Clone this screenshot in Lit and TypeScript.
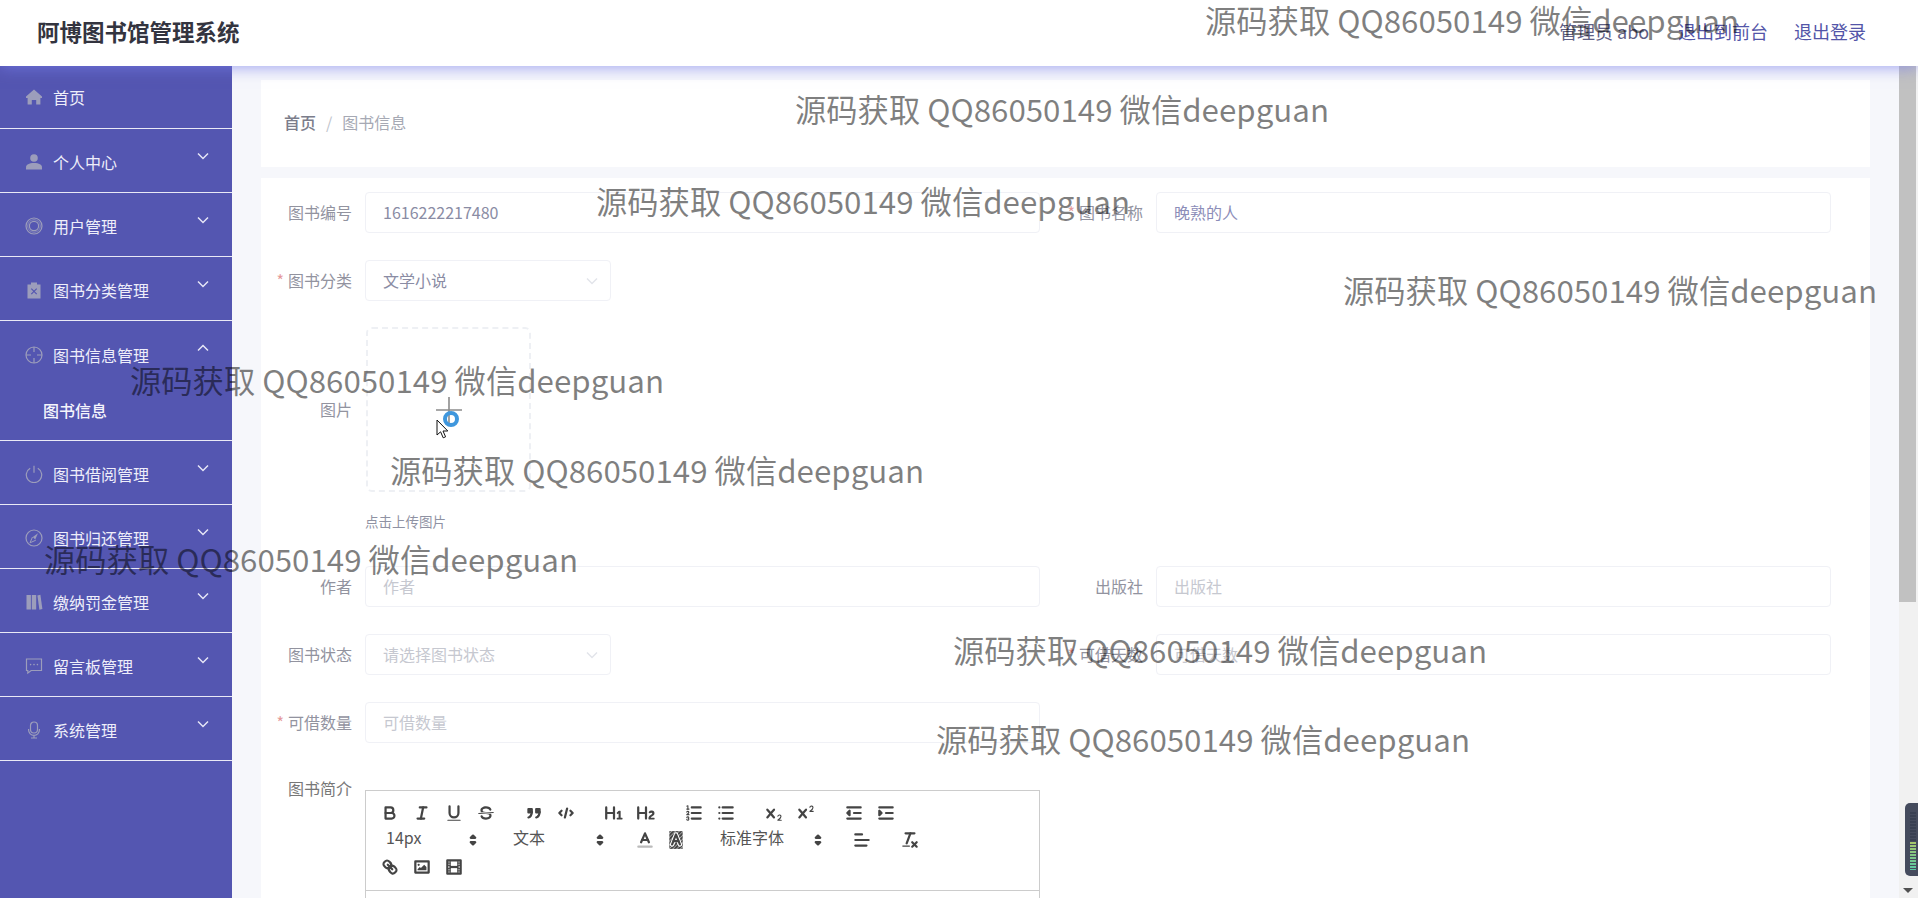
import { LitElement, html, css, svg } from "lit";
import { customElement } from "lit/decorators.js";

const S = (inner: unknown) => html`<svg class="ql" viewBox="0 0 18 18">${inner}</svg>`;

const QL = {
  bold: S(svg`<path d="M5,4H9.5A2.5,2.5,0,0,1,12,6.5v0A2.5,2.5,0,0,1,9.5,9H5A0,0,0,0,1,5,9V4A0,0,0,0,1,5,4Z"/><path d="M5,9h5.5A2.5,2.5,0,0,1,13,11.5v0A2.5,2.5,0,0,1,10.5,14H5a0,0,0,0,1,0,0V9A0,0,0,0,1,5,9Z"/>`),
  italic: S(svg`<line x1="7" x2="13" y1="4" y2="4"/><line x1="5" x2="11" y1="14" y2="14"/><line x1="8" x2="10" y1="14" y2="4"/>`),
  underline: S(svg`<path d="M5,3V9a4.012,4.012,0,0,0,4,4H9a4.012,4.012,0,0,0,4-4V3"/><rect class="f" height="1" rx=".5" ry=".5" width="12" x="3" y="15"/>`),
  strike: S(svg`<line class="t" x1="15.5" x2="2.5" y1="8.5" y2="9.5"/><path class="f" d="M9.007,8C6.542,7.791,6,7.519,6,6.5,6,5.792,7.283,5,9,5c1.571,0,2.765.679,2.969,1.309a1,1,0,0,0,1.9-.617C13.356,4.106,11.354,3,9,3,6.2,3,4,4.538,4,6.5a3.2,3.2,0,0,0,.5,1.843Z"/><path class="f" d="M8.984,10C11.457,10.208,12,10.479,12,11.5c0,.708-1.283,1.5-3,1.5-1.571,0-2.765-.679-2.969-1.309a1,1,0,1,0-1.9.617C4.644,13.894,6.646,15,9,15c2.8,0,5-1.538,5-3.5a3.2,3.2,0,0,0-.5-1.843Z"/>`),
  quote: S(svg`<rect class="fs" height="3" width="3" x="4" y="5.5"/><rect class="fs" height="3" width="3" x="11" y="5.5"/><path class="fs" d="M7,8c0,4.031-3,5-3,5"/><path class="fs" d="M14,8c0,4.031-3,5-3,5"/>`),
  code: S(svg`<polyline points="5 7 3 9 5 11"/><polyline points="13 7 15 9 13 11"/><line x1="10" x2="8" y1="5" y2="13"/>`),
  h1: S(svg`<path class="f" d="M10,4V14a1,1,0,0,1-2,0V10H3v4a1,1,0,0,1-2,0V4A1,1,0,0,1,3,4V8H8V4a1,1,0,0,1,2,0Zm6.06787,9.209H14.98975V7.59863a.54085.54085,0,0,0-.605-.60547h-.62744a1.01119,1.01119,0,0,0-.748.29688L11.645,8.56641a.5435.5435,0,0,0-.022.8584l.28613.30762a.53861.53861,0,0,0,.84717.0332l.09912-.08789a1.2137,1.2137,0,0,0,.2417-.35254h.02246s-.01123.30859-.01123.60547V13.209H12.041a.54085.54085,0,0,0-.605.60547v.43945a.54085.54085,0,0,0,.605.60547h4.02686a.54085.54085,0,0,0,.605-.60547v-.43945A.54085.54085,0,0,0,16.06787,13.209Z"/>`),
  h2: S(svg`<path class="f" d="M16.73975,13.81445v.43945a.54085.54085,0,0,1-.605.60547H11.855a.58392.58392,0,0,1-.64893-.60547V14.0127c0-2.90527,3.39941-3.42187,3.39941-4.55469a.77675.77675,0,0,0-.84717-.78125,1.17684,1.17684,0,0,0-.83594.38477c-.2749.26367-.561.374-.85791.13184l-.4292-.34082c-.30811-.24219-.38525-.51758-.1543-.81445a2.97155,2.97155,0,0,1,2.45361-1.17676,2.45393,2.45393,0,0,1,2.68408,2.40918c0,2.45312-3.1792,2.92676-3.27832,3.93848h2.79443A.54085.54085,0,0,1,16.73975,13.81445ZM9,3A.99974.99974,0,0,0,8,4V8H3V4A1,1,0,0,0,1,4V14a1,1,0,0,0,2,0V10H8v4a1,1,0,0,0,2,0V4A.99974.99974,0,0,0,9,3Z"/>`),
  ol: S(svg`<line x1="7" x2="15" y1="4" y2="4"/><line x1="7" x2="15" y1="9" y2="9"/><line x1="7" x2="15" y1="14" y2="14"/><line class="t" x1="2.5" x2="4.5" y1="5.5" y2="5.5"/><path class="f" d="M3.5,6A0.5,0.5,0,0,1,3,5.5V3.085l-0.276.138A0.5,0.5,0,0,1,2.053,3c-0.124-.247-0.023-0.324.224-0.447l1-.5A0.5,0.5,0,0,1,4,2.5v3A0.5,0.5,0,0,1,3.5,6Z"/><path class="t" d="M4.5,10.5h-2c0-.234,1.85-1.076,1.85-2.234A0.959,0.959,0,0,0,2.5,8.156"/><path class="t" d="M2.5,14.846a0.959,0.959,0,0,0,1.85-.109A0.7,0.7,0,0,0,3.75,14a0.688,0.688,0,0,0,.6-0.736,0.959,0.959,0,0,0-1.85-.109"/>`),
  ul: S(svg`<line x1="6" x2="15" y1="4" y2="4"/><line x1="6" x2="15" y1="9" y2="9"/><line x1="6" x2="15" y1="14" y2="14"/><line x1="3" x2="3" y1="4" y2="4"/><line x1="3" x2="3" y1="9" y2="9"/><line x1="3" x2="3" y1="14" y2="14"/>`),
  sub: S(svg`<path class="f" d="M15.5,15H13.861a3.858,3.858,0,0,0,1.914-2.975,1.8,1.8,0,0,0-1.6-1.751A1.921,1.921,0,0,0,12.021,11.7a0.50013,0.50013,0,1,0,.957.291h0a0.914,0.914,0,0,1,1.053-.725,0.81,0.81,0,0,1,.744.762c0,1.076-1.16971,1.86982-1.93971,2.43082A1.45639,1.45639,0,0,0,12,15.5a0.5,0.5,0,0,0,.5.5h3A0.5,0.5,0,0,0,15.5,15Z"/><path class="f" d="M9.65,5.241a1,1,0,0,0-1.409.108L6,7.964,3.759,5.349A1,1,0,0,0,2.241,6.651L4.684,9.5,2.241,12.35A1,1,0,0,0,3.759,13.651L6,11.036l2.241,2.615a1,1,0,0,0,1.519-1.3L7.316,9.5,9.759,6.651A1,1,0,0,0,9.65,5.241Z"/>`),
  sup: S(svg`<path class="f" d="M15.5,7H13.861a4.015,4.015,0,0,0,1.914-2.975,1.8,1.8,0,0,0-1.6-1.751A1.922,1.922,0,0,0,12.021,3.7a0.5,0.5,0,1,0,.957.291,0.917,0.917,0,0,1,1.053-.725,0.81,0.81,0,0,1,.744.762c0,1.077-1.164,1.925-1.934,2.486A1.423,1.423,0,0,0,12,7.5a0.5,0.5,0,0,0,.5.5h3A0.5,0.5,0,0,0,15.5,7Z"/><path class="f" d="M9.65,5.241a1,1,0,0,0-1.409.108L6,7.964,3.759,5.349A1,1,0,0,0,2.241,6.651L4.684,9.5,2.241,12.35A1,1,0,0,0,3.759,13.651L6,11.036l2.241,2.615a1,1,0,0,0,1.519-1.3L7.316,9.5,9.759,6.651A1,1,0,0,0,9.65,5.241Z"/>`),
  outdent: S(svg`<line x1="3" x2="15" y1="14" y2="14"/><line x1="3" x2="15" y1="4" y2="4"/><line x1="9" x2="15" y1="9" y2="9"/><polygon class="fs" points="5 7 5 11 3 9 5 7"/>`),
  indent: S(svg`<line x1="3" x2="15" y1="14" y2="14"/><line x1="3" x2="15" y1="4" y2="4"/><line x1="9" x2="15" y1="9" y2="9"/><polygon class="fs" points="3 7 3 11 5 9 3 7"/>`),
  arrows: S(svg`<polygon class="fs" points="7 11 9 13 11 11 7 11"/><polygon class="fs" points="7 7 9 5 11 7 7 7"/>`),
  color: S(svg`<line class="lbl" x1="3" x2="15" y1="15" y2="15"/><polyline class="th" points="5.5 11 9 3 12.5 11"/><line class="th" x1="11.63" x2="6.38" y1="9" y2="9"/>`),
  bg: S(svg`<defs><pattern id="hatch" width="2.4" height="2.4" patternUnits="userSpaceOnUse" patternTransform="rotate(45)"><rect width="1" height="2.4" fill="#888"/></pattern></defs><rect x="3" y="1" width="12" height="16" fill="url(#hatch)" stroke="none"/><polyline class="th" points="5.5 13 9 4 12.5 13" style="stroke:#fff;stroke-width:4"/><polyline class="th" points="5.5 13 9 4 12.5 13"/><line class="th" x1="11.2" x2="6.8" y1="10" y2="10"/>`),
  align: S(svg`<line x1="3" x2="15" y1="9" y2="9"/><line x1="3" x2="13" y1="14" y2="14"/><line x1="3" x2="9" y1="4" y2="4"/>`),
  clean: S(svg`<line x1="5" x2="13" y1="3" y2="3"/><line x1="6" x2="9.35" y1="12" y2="3"/><line x1="11" x2="15" y1="11" y2="15"/><line x1="15" x2="11" y1="11" y2="15"/><rect class="f" height="1" rx=".5" ry=".5" width="7" x="2" y="14"/>`),
  link: S(svg`<line x1="7" x2="11" y1="7" y2="11"/><path d="M8.9,4.577a3.476,3.476,0,0,1,.36,4.679A3.476,3.476,0,0,1,4.577,8.9C3.185,7.5,2.035,6.4,4.217,4.217S7.5,3.185,8.9,4.577Z"/><path d="M13.423,9.1a3.476,3.476,0,0,0-4.679-.36,3.476,3.476,0,0,0,.36,4.679c1.392,1.392,2.5,2.542,4.679.36S14.815,10.5,13.423,9.1Z"/>`),
  image: S(svg`<rect height="10" width="12" x="3" y="4"/><circle class="f" cx="6" cy="7" r="1"/><polyline class="f" points="5 12 5 11 7 9 8 10 11 7 13 9 13 12 5 12"/>`),
  video: S(svg`<rect height="12" width="12" x="3" y="3"/><rect class="f" height="12" width="1" x="5" y="3"/><rect class="f" height="12" width="1" x="12" y="3"/><rect class="f" height="2" width="8" x="5" y="8"/><rect class="f" height="1" width="3" x="3" y="5"/><rect class="f" height="1" width="3" x="3" y="7"/><rect class="f" height="1" width="3" x="3" y="10"/><rect class="f" height="1" width="3" x="3" y="12"/><rect class="f" height="1" width="3" x="12" y="5"/><rect class="f" height="1" width="3" x="12" y="7"/><rect class="f" height="1" width="3" x="12" y="10"/><rect class="f" height="1" width="3" x="12" y="12"/>`),
};

const M = (inner: unknown) => html`<svg class="mi" viewBox="0 0 18 18">${inner}</svg>`;
const MENU_ICONS = {
  home: M(svg`<path class="mf" d="M9 1.5 1 8.5V10h1.6v6.5h4.2V12h4.4v4.5h4.2V10H17V8.5Z"/>`),
  user: M(svg`<circle class="mf" cx="9" cy="5" r="3.8"/><path class="mf" d="M1 16.5v-2.2C1 11.6 4 10 9 10s8 1.6 8 4.3v2.2Z"/>`),
  ring: M(svg`<circle cx="9" cy="9" r="8"/><circle cx="9" cy="9" r="4.6"/><circle cx="9" cy="9" r="6.3" stroke-width=".7"/>`),
  clip: M(svg`<path class="mf" d="M2.5 3.5h3.5V1.5h6v2h3.5v14h-13Z"/><path d="M6.3 7.7l5.4 5.4M11.7 7.7l-5.4 5.4" stroke="#5456b1" stroke-width="1.2"/>`),
  aim: M(svg`<circle cx="9" cy="9" r="8"/><path d="M9 1v5M9 12v5M1 9h5M12 9h5"/>`),
  power: M(svg`<path d="M5.2 3.2a7.7 7.7 0 1 0 7.6 0"/><path d="M9 .8v7"/>`),
  compass: M(svg`<circle cx="9" cy="9" r="8"/><path class="mf" d="M13 4.2 10.2 10.4 7.8 8Z"/><path d="M7.5 8 5 13.8l5.8-2.6" stroke-width="1"/>`),
  books: M(svg`<rect class="mf" x="1.5" y="2" width="4.4" height="14.5"/><rect class="mf" x="6.8" y="2" width="4.4" height="14.5"/><path class="mf" d="M12.4 2.4l3-.6 2 14.3-3 .6Z"/>`),
  chat: M(svg`<path d="M1.5 2h15v11.5H6.2L2.8 16v-2.5H1.5Z"/><circle class="mf" cx="5.6" cy="7.6" r=".8"/><circle class="mf" cx="9" cy="7.6" r=".8"/><circle class="mf" cx="12.4" cy="7.6" r=".8"/>`),
  mic: M(svg`<rect x="5.5" y="1" width="7" height="11" rx="3.5"/><path d="M3.6 8v1a5.4 5.4 0 0 0 10.8 0V8M9 14.5v2.5M6 17h6"/>`),
};

const MENU: { t: string; i: keyof typeof MENU_ICONS; chev?: boolean; sub?: string }[] = [
  { t: "首页", i: "home" },
  { t: "个人中心", i: "user", chev: true },
  { t: "用户管理", i: "ring", chev: true },
  { t: "图书分类管理", i: "clip", chev: true },
  { t: "图书信息管理", i: "aim", chev: true, sub: "图书信息" },
  { t: "图书借阅管理", i: "power", chev: true },
  { t: "图书归还管理", i: "compass", chev: true },
  { t: "缴纳罚金管理", i: "books", chev: true },
  { t: "留言板管理", i: "chat", chev: true },
  { t: "系统管理", i: "mic", chev: true },
];

const MARKS = [
  [1205, 21], [795, 110], [596, 202], [1343, 291], [130, 381],
  [390, 471], [44, 560], [953, 651], [936, 740],
];

@customElement("app-root")
export class AppRoot extends LitElement {
  static styles = css`
    :host {
      display: block;
      position: relative;
      height: 898px;
      overflow: hidden;
      background: #f6f7fb;
      font-family: "Noto Sans CJK SC", "Noto Sans", sans-serif;
      font-size: 16px;
    }
    .header {
      position: relative;
      z-index: 2;
      height: 66px;
      box-sizing: border-box;
      display: flex;
      align-items: center;
      justify-content: space-between;
      padding: 0 52px 4px 37px;
      background: #fff;
      box-shadow: 0 2px 14px rgba(120, 125, 235, 0.65);
    }
    .title { font-size: 22.5px; font-weight: 700; color: #33343f; }
    .nav { display: flex; font-size: 18px; color: #5355a8; }
    .who { color: #5f6086; width: 119px; }
    .back { width: 116px; }
    .body { display: flex; height: 832px; }
    .side { width: 232px; flex: none; background: #5456b1; color: #eeeefa; }
    .item {
      height: 64px;
      box-sizing: border-box;
      border-bottom: 1px solid #e9e9f6;
      padding: 3px 22px 0 25px;
      display: flex;
      align-items: center;
    }
    .item.first { height: 63px; padding-top: 0; }
    .group { border-bottom: 1px solid #e9e9f6; }
    .group .item { border-bottom: none; }
    .subitem {
      height: 55px;
      padding: 0 0 6px 43px;
      box-sizing: border-box;
      display: flex;
      align-items: center;
      font-weight: 500;
      color: #f4f4fc;
    }
    .label-t { flex: 1; margin-left: 10px; }
    .mi {
      width: 18px;
      height: 18px;
      fill: none;
      stroke: #9c9dbb;
      stroke-width: 1.2;
      flex: none;
    }
    .mf { fill: #9c9dbb; stroke: none; }
    .chev {
      width: 14px;
      height: 10px;
      align-self: flex-start;
      margin-top: 19px;
      fill: none;
      stroke: #e6e6f6;
      stroke-width: 1.5;
    }
    .content { flex: 1; min-width: 0; padding: 14px 29px 0; overflow: hidden; }
    .crumb {
      height: 87px;
      box-sizing: border-box;
      background: #fff;
      display: flex;
      align-items: center;
      padding: 0 0 4px 23px;
      margin-bottom: 11px;
      color: #a6a9b4;
    }
    .crumb b { font-weight: 500; color: #7b7d8b; }
    .crumb i { font-style: normal; margin: 0 10px; color: #c0c4cc; }
    .card { background: #fff; padding-top: 14px; height: 720px; }
    .row { display: flex; gap: 12px; margin-bottom: 27px; }
    .field { display: flex; gap: 13px; width: 779px; }
    .lab {
      width: 91px;
      height: 41px;
      line-height: 41px;
      text-align: right;
      flex: none;
      color: #92939f;
      white-space: nowrap;
    }
    .lab em { font-style: normal; color: #e59a9a; margin-right: 4px; }
    .lab.dark { color: #777; line-height: 37px; }
    .inp {
      width: 675px;
      height: 41px;
      box-sizing: border-box;
      border: 1px solid #f0f1f6;
      border-radius: 4px;
      padding: 0 14px 0 17px;
      line-height: 39px;
      color: #8a8ca4;
      display: flex;
      justify-content: space-between;
      align-items: center;
    }
    .inp.sel { width: 246px; padding-right: 12px; }
    .inp.title-v { color: #8c8db8; }
    .ph { color: #c6c8d0; }
    .dn { width: 12px; height: 8px; fill: none; stroke: #e2e4ea; stroke-width: 1.4; }
    .up-row { display: flex; gap: 13px; height: 165px; margin-top: -1px; }
    .up-lab { height: 165px; line-height: 165px; }
    .upbox {
      width: 165px;
      height: 165px;
      margin-left: 1px;
      box-sizing: border-box;
      border: 2px dashed #eef0f4;
      border-radius: 6px;
      display: flex;
      align-items: center;
      justify-content: center;
    }
    .plus { width: 26px; height: 26px; stroke: #8c8c8c; stroke-width: 1.6; fill: none; }
    .cap {
      margin: 19px 0 35px 104px;
      height: 20px;
      line-height: 20px;
      font-size: 13.5px;
      color: #8f92a3;
    }
    .ed-wrap { padding-top: 20px; }
    .editor {
      width: 675px;
      height: 200px;
      box-sizing: border-box;
      border: 1px solid #ccc;
    }
    .tb {
      padding: 10px 0 10px 10px;
      border-bottom: 1px solid #ccc;
      height: 100px;
      box-sizing: border-box;
    }
    .tr { display: flex; height: 24px; margin-bottom: 3px; align-items: center; }
    .tr:last-child { margin-bottom: 0; }
    .tb-btn { width: 28px; height: 24px; margin-right: 4px; display: flex; align-items: center; justify-content: center; flex: none; }
    .tb-btn.gap { margin-right: 20px; }
    .tb-btn.tight { margin-right: 3px; }
    .ql { width: 20px; height: 20px; fill: none; stroke: #444; stroke-width: 2; stroke-linecap: round; stroke-linejoin: round; flex: none; }
    .ql .f { fill: #444; stroke: none; }
    .ql .fs { fill: #444; stroke: #444; stroke-width: 2; }
    .ql .t { stroke-width: 1; }
    .ql .th { stroke-width: 2; }
    .ql .lbl { stroke: #bbb; }
    .pick {
      width: 107px;
      height: 24px;
      box-sizing: border-box;
      padding-left: 10px;
      margin-right: 20px;
      display: flex;
      justify-content: space-between;
      align-items: center;
      color: #555;
      flex: none;
    }
    .pick span { margin-top: -6px; }
    .pick.w2 { width: 118px; }
    .pick.m2 { margin-right: 21px; }
    .bar { width: 19px; flex: none; background: #f1f1f1; position: relative; }
    .thumb { width: 17px; height: 536px; background: #c1c1c1; }
    .tri {
      position: absolute;
      left: 4px;
      bottom: 5px;
      border-left: 5px solid transparent;
      border-right: 5px solid transparent;
      border-top: 5px solid #505050;
    }
    .widget {
      position: absolute;
      left: 1905px;
      top: 803px;
      width: 13px;
      height: 73px;
      border-radius: 5px 0 0 5px;
      background: #454b5d;
      z-index: 3;
    }
    .meter {
      position: absolute;
      left: 5px;
      top: 9px;
      width: 6px;
      height: 58px;
      background:
        repeating-linear-gradient(#0000 0 2px, #454b5d 2px 3px),
        linear-gradient(#394052 0 50%, #a6c66a 52%, #58c8a4 100%);
    }
    .wm {
      position: absolute;
      z-index: 4;
      font-size: 31.3px;
      line-height: 44px;
      margin-top: -23px;
      white-space: nowrap;
      color: rgba(0, 0, 0, 0.5);
      pointer-events: none;
    }
    .ring {
      position: absolute;
      left: 443px;
      top: 411px;
      width: 16px;
      height: 16px;
      box-sizing: border-box;
      border: 4.5px solid #3f97dd;
      border-radius: 50%;
      z-index: 5;
    }
    .cursor { position: absolute; left: 436px; top: 419px; width: 13px; height: 20px; z-index: 6; }
  `;

  private input(label: string, text: string, opts: { req?: boolean; ph?: boolean; sel?: boolean; val2?: boolean } = {}) {
    return html`<div class="field">
      <div class="lab">${opts.req ? html`<em>*</em>` : ""}${label}</div>
      <div class="inp ${opts.sel ? "sel" : ""} ${opts.val2 ? "title-v" : ""}">
        <span class="${opts.ph ? "ph" : ""}">${text}</span>
        ${opts.sel ? html`<svg class="dn" viewBox="0 0 12 8"><path d="M1 1.5l5 5 5-5" /></svg>` : ""}
      </div>
    </div>`;
  }

  private btn(icon: unknown, cls = "") {
    return html`<span class="tb-btn ${cls}">${icon}</span>`;
  }

  private pick(label: string, cls = "") {
    return html`<span class="pick ${cls}"><span>${label}</span>${QL.arrows}</span>`;
  }

  private menuItem(m: (typeof MENU)[number], i: number) {
    const up = !!m.sub;
    const row = html`<div class="item ${i === 0 ? "first" : ""}">
      ${MENU_ICONS[m.i]}
      <span class="label-t">${m.t}</span>
      ${m.chev
        ? html`<svg class="chev" viewBox="0 0 14 10"><path d="${up ? "M2 7.5l5-5 5 5" : "M2 2.5l5 5 5-5"}" /></svg>`
        : ""}
    </div>`;
    return up
      ? html`<div class="group">${row}<div class="subitem">${m.sub}</div></div>`
      : row;
  }

  render() {
    return html`
      <div class="header">
        <div class="title">阿博图书馆管理系统</div>
        <div class="nav">
          <span class="who">管理员 abo</span>
          <span class="back">退出到前台</span>
          <span>退出登录</span>
        </div>
      </div>
      <div class="body">
        <div class="side">${MENU.map((m, i) => this.menuItem(m, i))}</div>
        <div class="content">
          <div class="crumb"><b>首页</b><i>/</i><span>图书信息</span></div>
          <div class="card">
            <div class="row">
              ${this.input("图书编号", "1616222217480")}
              ${this.input("图书名称", "晚熟的人", { req: true, val2: true })}
            </div>
            <div class="row">${this.input("图书分类", "文学小说", { req: true, sel: true })}</div>
            <div class="up-row">
              <div class="lab up-lab">图片</div>
              <div class="upbox">
                <svg class="plus" viewBox="0 0 26 26"><path d="M0 13h26M13 0v26" /></svg>
              </div>
            </div>
            <div class="cap">点击上传图片</div>
            <div class="row">
              ${this.input("作者", "作者", { ph: true })}
              ${this.input("出版社", "出版社", { ph: true })}
            </div>
            <div class="row">
              ${this.input("图书状态", "请选择图书状态", { ph: true, sel: true })}
              ${this.input("可借天数", "可借天数", { req: true, ph: true })}
            </div>
            <div class="row">${this.input("可借数量", "可借数量", { req: true, ph: true })}</div>
            <div class="field">
              <div class="lab dark">图书简介</div>
              <div class="ed-wrap">
                <div class="editor">
                  <div class="tb">
                    <div class="tr">
                      ${this.btn(QL.bold)}${this.btn(QL.italic)}${this.btn(QL.underline)}${this.btn(QL.strike, "gap")}
                      ${this.btn(QL.quote)}${this.btn(QL.code, "gap")}
                      ${this.btn(QL.h1)}${this.btn(QL.h2, "gap")}
                      ${this.btn(QL.ol)}${this.btn(QL.ul, "gap")}
                      ${this.btn(QL.sub)}${this.btn(QL.sup, "gap")}
                      ${this.btn(QL.outdent)}${this.btn(QL.indent)}
                    </div>
                    <div class="tr">
                      ${this.pick("14px")}${this.pick("文本", "m2")}
                      ${this.btn(QL.color, "tight")}${this.btn(QL.bg, "gap")}
                      ${this.pick("标准字体", "w2")}
                      ${this.btn(QL.align, "gap")}${this.btn(QL.clean)}
                    </div>
                    <div class="tr">
                      ${this.btn(QL.link)}${this.btn(QL.image)}${this.btn(QL.video)}
                    </div>
                  </div>
                </div>
              </div>
            </div>
          </div>
        </div>
        <div class="bar"><div class="thumb"></div><div class="tri"></div></div>
      </div>
      <div class="widget"><div class="meter"></div></div>
      ${MARKS.map(
        ([x, y]) => html`<div class="wm" style="left:${x}px;top:${y}px">源码获取 QQ86050149 微信deepguan</div>`
      )}
      <div class="ring"></div>
      <svg class="cursor" viewBox="0 0 13 20">
        <path d="M1 1v15l3.6-3.2 2.6 6 2.4-1-2.6-5.8h4.8Z" fill="#fff" stroke="#111" stroke-width="1" />
      </svg>
    `;
  }
}
